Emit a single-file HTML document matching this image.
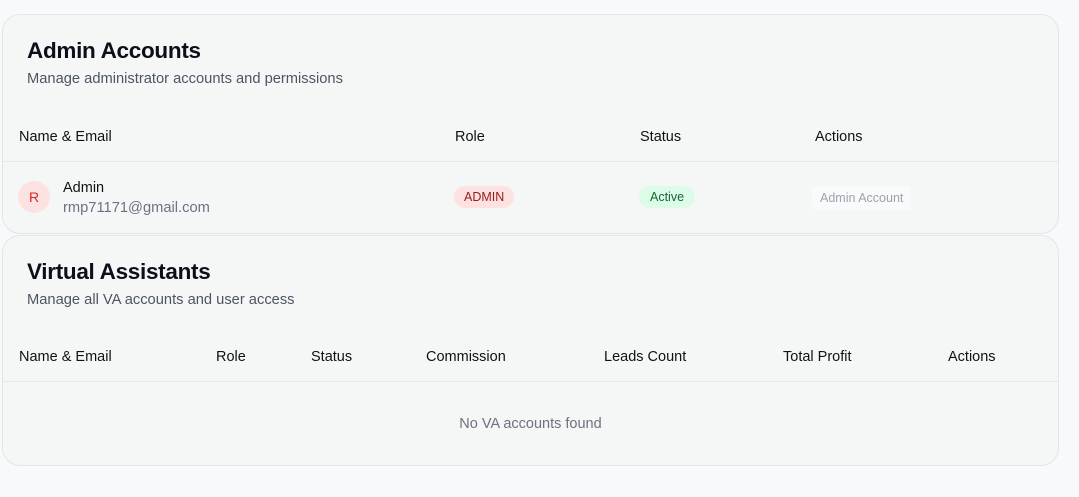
<!DOCTYPE html>
<html><head><meta charset="utf-8"><style>
*{box-sizing:border-box;margin:0;padding:0}
body{width:1079px;height:497px;background:#f8f9fa;font-family:"Liberation Sans",sans-serif;position:relative;overflow:hidden;color:#111}
.card{position:absolute;left:2px;width:1057px;background:#f5f7f7;border:1px solid #e2e6ea;border-radius:18px}
.abs{position:absolute;white-space:nowrap}
h1{position:absolute;left:24px;font-size:22.5px;font-weight:bold;color:#0b0f19;letter-spacing:-0.3px}
.sub{position:absolute;left:24px;font-size:14.7px;color:#4b5563}
.th{position:absolute;font-size:14.5px;color:#111}
.line{position:absolute;left:0;right:0;height:1px;background:#e2e8ee}
</style></head><body>
<div class="card" style="top:14px;height:220px">
  <h1 style="top:23px">Admin Accounts</h1>
  <div class="sub" style="top:56px">Manage administrator accounts and permissions</div>
  <div class="th" style="left:16px;top:114px">Name &amp; Email</div>
  <div class="th" style="left:452px;top:114px">Role</div>
  <div class="th" style="left:637px;top:114px">Status</div>
  <div class="th" style="left:812px;top:114px">Actions</div>
  <div class="line" style="top:146px"></div>
  <div class="abs" style="left:15px;top:166px;width:32px;height:32px;border-radius:50%;background:#fde2e2;color:#dc2626;font-size:14px;text-align:center;line-height:32px">R</div>
  <div class="abs" style="left:60px;top:165px;font-size:14.5px">Admin</div>
  <div class="abs" style="left:60px;top:185px;font-size:14.7px;color:#6b7280">rmp71171@gmail.com</div>
  <div class="abs" style="left:451px;top:171px;height:22px;padding:0 10px;border-radius:11px;background:#fee2e2;color:#991b1b;font-size:12.5px;line-height:22px">ADMIN</div>
  <div class="abs" style="left:636px;top:171px;height:22px;padding:0 11px;border-radius:11px;background:#dcfce7;color:#166534;font-size:12.5px;line-height:22px">Active</div>
  <div class="abs" style="left:809px;top:171px;height:24px;padding:0 8px;border-radius:4px;background:#f9fafb;color:#9ca3af;font-size:12.5px;line-height:24px">Admin Account</div>
</div>
<div class="card" style="top:235px;height:231px">
  <h1 style="top:23px">Virtual Assistants</h1>
  <div class="sub" style="top:56px">Manage all VA accounts and user access</div>
  <div class="th" style="left:16px;top:113px">Name &amp; Email</div>
  <div class="th" style="left:213px;top:113px">Role</div>
  <div class="th" style="left:308px;top:113px">Status</div>
  <div class="th" style="left:423px;top:113px">Commission</div>
  <div class="th" style="left:601px;top:113px">Leads Count</div>
  <div class="th" style="left:780px;top:113px">Total Profit</div>
  <div class="th" style="left:945px;top:113px">Actions</div>
  <div class="line" style="top:145px"></div>
  <div class="abs" style="left:0;right:0;top:180px;text-align:center;font-size:14.5px;color:#6b7280">No VA accounts found</div>
</div>
</body></html>
